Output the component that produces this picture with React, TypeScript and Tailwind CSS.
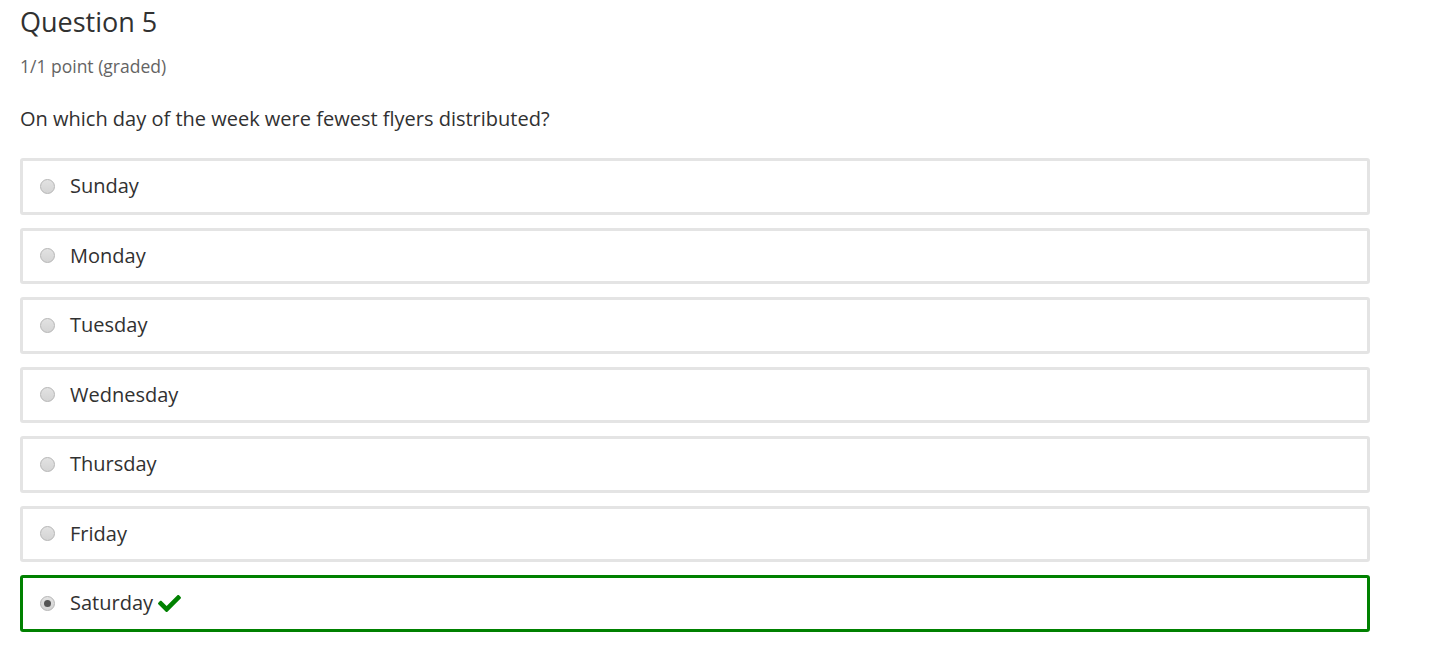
const days = ["Sunday", "Monday", "Tuesday", "Wednesday", "Thursday", "Friday", "Saturday"];
const answer = "Saturday";

const Radio = ({ checked }: { checked: boolean }) => (
  <span className="flex h-[15px] w-[15px] items-center justify-center rounded-full border border-[#b5b5b5] bg-gradient-to-b from-[#e2e2e2] to-[#d4d4d4]">
    {checked && <span className="h-[7px] w-[7px] rounded-full bg-[#555]" />}
  </span>
);

const Check = () => (
  <svg viewBox="0 0 512 512" className="ml-[5px] h-[23px] w-[23px]" fill="#008100">
    <path d="M173.898 439.404l-166.4-166.4c-9.997-9.997-9.997-26.206 0-36.204l36.203-36.204c9.997-9.998 26.207-9.998 36.204 0L192 312.69 432.095 72.596c9.997-9.997 26.207-9.997 36.204 0l36.203 36.204c9.997 9.997 9.997 26.206 0 36.204l-294.4 294.401c-9.998 9.997-26.207 9.997-36.204-.001z" />
  </svg>
);

export default function App() {
  return (
    <div className="min-h-screen bg-white px-5 pt-[4px] font-['Open_Sans',sans-serif]">
      <h2 className="text-[27px] leading-[36px] text-[#313131]">Question 5</h2>
      <div className="mt-[14px] text-[17.5px] leading-[24px] text-[#646464]">1/1 point (graded)</div>
      <p className="mt-[27px] text-[20px] leading-[28px] text-[#313131]">
        On which day of the week were fewest flyers distributed?
      </p>
      <div className="mt-[25px] flex w-[1350px] flex-col gap-[13px]">
        {days.map((day) => {
          const correct = day === answer;
          return (
            <label
              key={day}
              className={
                correct
                  ? "flex h-[56.5px] items-center rounded-[3px] border-[3px] border-[#008100] pl-[17px]"
                  : "flex h-[56.5px] items-center rounded-[3px] border-[3px] border-[#e4e4e4] pl-[17px]"
              }
            >
              <Radio checked={correct} />
              <span className="ml-[15px] text-[20px] text-[#313131]">{day}</span>
              {correct && <Check />}
            </label>
          );
        })}
      </div>
    </div>
  );
}
